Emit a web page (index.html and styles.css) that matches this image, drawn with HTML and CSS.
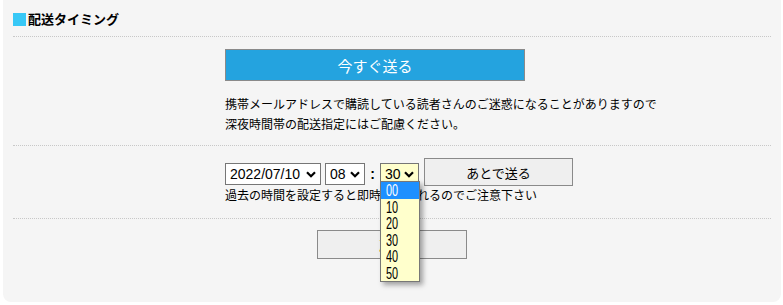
FILE: index.html
```html
<!DOCTYPE html>
<html lang="ja">
<head>
    <meta charset="UTF-8" />
    <meta name="viewport" content="width=device-width, initial-scale=1.0"/>
    <title>配送タイミング</title>
    <link rel="stylesheet" href="styles.css">
</head>
<body>

<div class="panel">
    <h2 class="panel-title"><span class="mark"></span>配送タイミング</h2>

    <!-- 即時配信 -->
    <div class="block">
        <div class="inner">
            <button type="button" class="btn-now">今すぐ送る</button>
            <p class="note">携帯メールアドレスで購読している読者さんのご迷惑になることがありますので<br>深夜時間帯の配送指定にはご配慮ください。</p>
        </div>
    </div>

    <!-- 予約配信 -->
    <div class="block block-later">
        <div class="inner">
            <div class="time-row">
                <span class="sel sel-date">
                    <select><option>2022/07/10</option></select>
                    <svg class="chev" width="10" height="7" viewBox="0 0 10 7"><path d="M1 1.2 L5 5.2 L9 1.2" fill="none" stroke="#000" stroke-width="2.2"/></svg>
                </span>
                <span class="sel sel-hour">
                    <select><option>08</option></select>
                    <svg class="chev" width="10" height="7" viewBox="0 0 10 7"><path d="M1 1.2 L5 5.2 L9 1.2" fill="none" stroke="#000" stroke-width="2.2"/></svg>
                </span>
                <span class="colon">:</span>
                <span class="sel sel-min">
                    <select><option>30</option></select>
                    <svg class="chev" width="10" height="7" viewBox="0 0 10 7"><path d="M1 1.2 L5 5.2 L9 1.2" fill="none" stroke="#000" stroke-width="2.2"/></svg>
                    <!-- 開いているプルダウン -->
                    <ul class="dropdown">
                        <li class="active"><span>00</span></li>
                        <li><span>10</span></li>
                        <li><span>20</span></li>
                        <li><span>30</span></li>
                        <li><span>40</span></li>
                        <li><span>50</span></li>
                    </ul>
                </span>
                <button type="button" class="btn-later">あとで送る</button>
            </div>
            <p class="hint">過去の時間を設定すると即時配信されるのでご注意下さい</p>
        </div>
    </div>

    <div class="block last">
        <button type="button" class="btn-back">戻る</button>
    </div>
</div>

</body>
</html>
```

FILE: styles.css
```css
body {
    margin:0;
    background:#fff;
    font-family:"Noto Sans CJK JP", sans-serif;
    color:#000;
}

.panel {
    margin:0 2px 0 3px;
    background:#f5f5f5;
    border-radius:0 0 8px 8px;
    padding:11px 10px 43px 10px;
}

.panel-title {
    margin:0;
    display:flex;
    align-items:center;
    gap:2px;
    font-size:13px;
    line-height:16px;
    font-weight:bold;
    padding-bottom:9px;
    border-bottom:1px dotted #c8c8c8;
}

.panel-title .mark {
    width:13px;
    height:13px;
    background:#38c8f6;
}

.block {
    padding:12px 0 11px 0;
    border-bottom:1px dotted #c8c8c8;
}

.block-later {
    padding-bottom:15px;
}

.block.last {
    border-bottom:none;
    padding:11px 0 0 0;
    text-align:center;
}

.inner {
    padding-left:212px;
}

.btn-now {
    display:block;
    width:300px;
    height:32px;
    background:#24a3df;
    border:1px solid #8a8a8a;
    color:#fff;
    font-family:"Noto Sans CJK JP", sans-serif;
    font-size:15px;
    cursor:pointer;
}

.note {
    margin:13px 0 0 0;
    font-size:12px;
    line-height:20px;
}

.time-row {
    display:flex;
    align-items:flex-end;
}

.sel {
    position:relative;
    display:block;
    margin-bottom:1px;
}

.sel select {
    appearance:none;
    -webkit-appearance:none;
    display:block;
    height:22px;
    border:1px solid #767676;
    border-radius:0;
    background:#fff;
    padding:0 0 0 4px;
    font-family:"Liberation Sans", sans-serif;
    font-size:14px;
    color:#000;
}

.sel .chev {
    position:absolute;
    right:5px;
    top:8px;
    pointer-events:none;
}

.sel-date select { width:96px; }
.sel-hour { margin-left:4px; }
.sel-hour select { width:40px; }
.sel-min select {
    width:39px;
    background:#ffffcc;
}

.colon {
    width:15px;
    text-align:center;
    font-family:"Liberation Sans", sans-serif;
    font-size:14px;
    font-weight:bold;
    line-height:22px;
    margin-bottom:1px;
}

.dropdown {
    position:absolute;
    left:0;
    top:18px;
    width:38px;
    margin:0;
    padding:0;
    list-style:none;
    background:#ffffcc;
    border:1px solid #777;
    box-shadow:3px 3px 5px rgba(0,0,0,0.35);
    z-index:5;
}

.dropdown li {
    height:16.5px;
    line-height:17px;
    padding-left:5px;
    font-family:"Liberation Sans", sans-serif;
    font-size:16px;
}

/* MS UI Gothic風の細い数字 */
.dropdown li span {
    display:inline-block;
    transform:scaleX(0.68);
    transform-origin:left center;
}

.dropdown li.active {
    background:#1e90ff;
    color:#fff;
}

.btn-later {
    margin-left:5px;
    width:149px;
    height:28px;
    background:#efefef;
    border:1px solid #8a8a8a;
    font-family:"Noto Sans CJK JP", sans-serif;
    font-size:13px;
    color:#000;
}

.hint {
    margin:1px 0 0 0;
    font-size:12px;
    line-height:16px;
}

.btn-back {
    width:150px;
    height:29px;
    background:#efefef;
    border:1px solid #8a8a8a;
    font-family:"Noto Sans CJK JP", sans-serif;
    font-size:13px;
    color:#e08a00;
}
```
